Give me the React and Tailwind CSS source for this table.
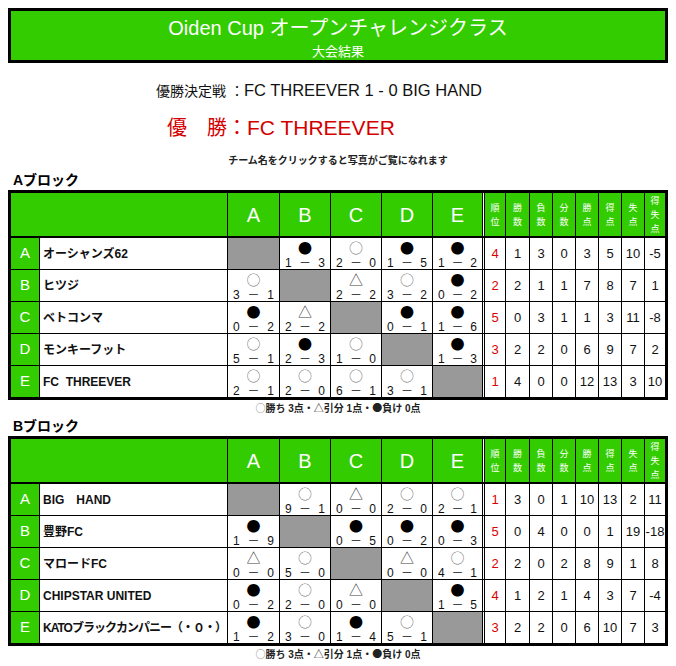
import React from "react";

const COLS = ["A", "B", "C", "D", "E"];
const STAT_HEADS = [["順", "位"], ["勝", "数"], ["負", "数"], ["分", "数"], ["勝", "点"], ["得", "点"], ["失", "点"], ["得", "失", "点"]];

const blockA = [
  { l: "A", name: "オーシャンズ62", r: [null, ["●", "1", "3"], ["○", "2", "0"], ["●", "1", "5"], ["●", "1", "2"]], s: [4, 1, 3, 0, 3, 5, 10, -5] },
  { l: "B", name: "ヒツジ", r: [["○", "3", "1"], null, ["△", "2", "2"], ["○", "3", "2"], ["●", "0", "2"]], s: [2, 2, 1, 1, 7, 8, 7, 1] },
  { l: "C", name: "ベトコンマ", r: [["●", "0", "2"], ["△", "2", "2"], null, ["●", "0", "1"], ["●", "1", "6"]], s: [5, 0, 3, 1, 1, 3, 11, -8] },
  { l: "D", name: "モンキーフット", r: [["○", "5", "1"], ["●", "2", "3"], ["○", "1", "0"], null, ["●", "1", "3"]], s: [3, 2, 2, 0, 6, 9, 7, 2] },
  { l: "E", name: "FC\u00a0\u00a0THREEVER", r: [["○", "2", "1"], ["○", "2", "0"], ["○", "6", "1"], ["○", "3", "1"], null], s: [1, 4, 0, 0, 12, 13, 3, 10] },
];

const blockB = [
  { l: "A", name: "BIG\u3000HAND", r: [null, ["○", "9", "1"], ["△", "0", "0"], ["○", "2", "0"], ["○", "2", "1"]], s: [1, 3, 0, 1, 10, 13, 2, 11] },
  { l: "B", name: "豊野FC", r: [["●", "1", "9"], null, ["●", "0", "5"], ["●", "0", "2"], ["●", "0", "3"]], s: [5, 0, 4, 0, 0, 1, 19, -18] },
  { l: "C", name: "マロードFC", r: [["△", "0", "0"], ["○", "5", "0"], null, ["△", "0", "0"], ["○", "4", "1"]], s: [2, 2, 0, 2, 8, 9, 1, 8] },
  { l: "D", name: "CHIPSTAR UNITED", r: [["●", "0", "2"], ["○", "2", "0"], ["△", "0", "0"], null, ["●", "1", "5"]], s: [4, 1, 2, 1, 4, 3, 7, -4] },
  { l: "E", name: "KATOブラックカンパニー（・０・）", tight: true, r: [["●", "1", "2"], ["○", "3", "0"], ["●", "1", "4"], ["○", "5", "1"], null], s: [3, 2, 2, 0, 6, 10, 7, 3] },
];

function Symbol({ c }) {
  if (c === "●") return <span className="font-['Noto_Sans_CJK_JP'] text-black">●</span>;
  if (c === "○") return <span className="font-['Noto_Sans_CJK_JP'] text-[#777777]">○</span>;
  return <span className="font-['Noto_Sans_CJK_JP'] text-[#444444]">△</span>;
}

function Block({ rows }) {
  return (
    <div className="mx-[8px] border-[3px] border-black bg-white">
      <div className="grid grid-cols-[29px_188px_52px_51px_51px_51px_49px_3px_21px_24px_23px_23px_23px_23px_23px_20px]">
        <div className="col-span-2 h-[45px] border-r border-b-2 border-black bg-[#33cc00]" />
        {COLS.map((c, i) => (
          <div
            key={c}
            className={`h-[45px] border-b-2 border-black bg-[#33cc00] text-white text-[20px] flex items-center justify-center ${i < 4 ? "border-r" : ""}`}
          >
            {c}
          </div>
        ))}
        <div className="h-[45px] border-x border-b-2 border-black bg-white" />
        {STAT_HEADS.map((h, i) => (
          <div
            key={i}
            className={`h-[45px] border-b-2 border-black bg-[#33cc00] text-white text-[9px] leading-[14px] flex flex-col items-center justify-center ${i < 7 ? "border-r" : ""}`}
          >
            {h.map((ch, k) => (
              <span key={k}>{ch}</span>
            ))}
          </div>
        ))}
        {rows.map((row, ri) => {
          const last = ri === rows.length - 1;
          const rh = last ? "h-[31px]" : "h-[32px] border-b";
          return (
            <React.Fragment key={row.l}>
              <div className={`${rh} border-r border-black bg-[#33cc00] text-white text-[15px] flex items-center justify-center`}>{row.l}</div>
              <div
                className={`${rh} border-r border-black bg-white text-[12px] font-bold text-[#111111] flex items-center pl-[3px] whitespace-nowrap overflow-hidden ${row.tight ? "tracking-[-1px]" : ""}`}
              >
                {row.name}
              </div>
              {row.r.map((v, ci) =>
                v ? (
                  <div key={ci} className={`${rh} ${ci < 4 ? "border-r" : ""} border-black bg-white flex flex-col`}>
                    <div className="h-[18px] flex items-center justify-center text-[14px] leading-[18px]">
                      <Symbol c={v[0]} />
                    </div>
                    <div className="flex justify-between px-[5px] text-[12px] leading-[12px] text-[#111111] mt-[1px]">
                      <span>{v[1]}</span>
                      <span>－</span>
                      <span>{v[2]}</span>
                    </div>
                  </div>
                ) : (
                  <div key={ci} className={`${rh} ${ci < 4 ? "border-r" : ""} border-black bg-[#999999]`} />
                )
              )}
              <div className={`${rh} border-x border-black bg-white`} />
              {row.s.map((n, si) => (
                <div
                  key={si}
                  className={`${rh} ${si < 7 ? "border-r" : ""} border-black bg-white flex items-center justify-center text-[13px] ${si === 0 ? "text-[#dd0000]" : "text-[#111111]"}`}
                >
                  {n}
                </div>
              ))}
            </React.Fragment>
          );
        })}
      </div>
    </div>
  );
}

function Legend() {
  return (
    <div className="mt-[1px] text-center text-[10px] leading-[14px] font-bold text-[#222222]">
      <span className="font-['Noto_Sans_CJK_JP'] font-normal text-[#888888]">○</span>勝ち 3点・
      <span className="font-['Noto_Sans_CJK_JP'] font-normal">△</span>引分 1点・
      <span className="font-['Noto_Sans_CJK_JP'] font-normal">●</span>負け 0点
    </div>
  );
}

export default function App() {
  return (
    <div className="w-[676px] h-[666px] bg-white overflow-hidden font-['Liberation_Sans','Noto_Sans_CJK_JP',sans-serif] text-black">
      <div className="mx-[8px] mt-[8px] h-[55px] border-[3px] border-black bg-[#33cc00] text-white flex flex-col items-center pt-[5px]">
        <div className="text-[20px] leading-[24px]">Oiden Cup オープンチャレンジクラス</div>
        <div className="text-[13px] leading-[16px] mt-[4px]">大会結果</div>
      </div>
      <div className="mt-[17px] pl-[156px] text-[16.5px] leading-[20px] text-[#111111]">
        <span className="text-[14px]">優勝決定戦</span>
        <span className="text-[14px]">&nbsp;：</span>FC THREEVER 1 - 0 BIG HAND
      </div>
      <div className="mt-[14px] pl-[167px] text-[20px] leading-[26px] text-[#d40000]">
        優　勝：<span className="text-[21px]">FC THREEVER</span>
      </div>
      <div className="mt-[13px] text-center text-[10px] leading-[14px] font-bold text-[#222222]">チーム名をクリックすると写真がご覧になれます</div>
      <div className="mt-[3px] pl-[13px] text-[14px] leading-[18px] font-bold">Aブロック</div>
      <div className="mt-[1px]">
        <Block rows={blockA} />
      </div>
      <Legend />
      <div className="mt-[1px] pl-[13px] text-[14px] leading-[18px] font-bold">Bブロック</div>
      <div className="mt-[1px]">
        <Block rows={blockB} />
      </div>
      <Legend />
    </div>
  );
}
